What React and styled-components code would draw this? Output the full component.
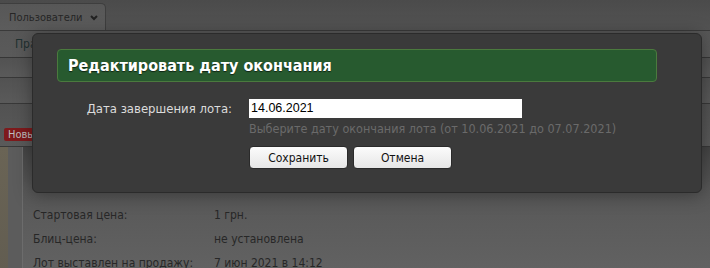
import React from "react";
import styled, { createGlobalStyle } from "styled-components";

const Global = createGlobalStyle`
  html, body { margin: 0; padding: 0; background: #4a4a4a; }
  body { font-family: Tahoma, "DejaVu Sans Condensed", "DejaVu Sans", sans-serif; }
`;

const Page = styled.div`
  position: relative;
  width: 710px;
  height: 268px;
  overflow: hidden;
  background: linear-gradient(#4d4d4d, #555 60px, #5a5a5a);
  display: flex;
  flex-direction: column;
`;

const TabBar = styled.div`
  height: 30px;
  flex: none;
  display: flex;
  align-items: flex-end;
  border-bottom: 1px solid #3a3a3a;
  background: linear-gradient(#4b4b4b, #535353);
`;

const Tab = styled.div`
  height: 27px;
  width: 106px;
  box-sizing: border-box;
  padding-left: 9px;
  display: flex;
  align-items: center;
  gap: 8px;
  font-size: 11px;
  color: #262626;
  background: linear-gradient(#575757, #5c5c5c);
  border: 1px solid #3e3e3e;
  border-left: none;
  border-bottom: none;
  border-top-right-radius: 5px;
`;

const Chevron = styled.svg`
  width: 8px;
  height: 6px;
  margin-top: 2px;
`;

const NavRow = styled.div`
  height: 26px;
  flex: none;
  display: flex;
  align-items: center;
  gap: 22px;
  padding-left: 15px;
  font-size: 12px;
  color: #1f3030;
  border-bottom: 1px solid #363636;
  background: linear-gradient(#575757, #5a5a5a);
`;

const Bar = styled.div`
  height: ${(p) => p.$h}px;
  flex: none;
  box-sizing: border-box;
  border-bottom: 1px solid #383838;
  background: linear-gradient(#525252, #5a5a5a);
  display: flex;
  align-items: ${(p) => (p.$align ? p.$align : "center")};
  padding-left: 4px;
`;

const Badge = styled.span`
  margin-top: 24px;
  display: inline-block;
  background: #7e1a1c;
  color: #bdbdbd;
  font-size: 11px;
  line-height: 13px;
  padding: 0 10px 0 4px;
  border-radius: 2px;
`;

const Content = styled.div`
  flex: 1;
  display: flex;
`;

const LeftStrip = styled.div`
  width: 8px;
  background: linear-gradient(#6a6455, #625d51);
`;

const Gutter = styled.div`
  width: 14px;
  background: #5c5c5c;
  border-right: 1px solid #6c6c6c;
`;

const Panel = styled.div`
  flex: 1;
  padding: 61px 0 0 10px;
  background: linear-gradient(#444 0px, #575757 40px, #626262 100%);
  display: grid;
  grid-template-columns: 181px 1fr;
  row-gap: 9px;
  align-content: start;
  font-size: 12px;
  color: #272727;
  line-height: 15px;
`;

const Modal = styled.div`
  position: absolute;
  left: 32px;
  top: 33px;
  width: 670px;
  height: 160px;
  box-sizing: border-box;
  background: #3a3a3a;
  border: 1px solid #2b2b2b;
  border-radius: 6px;
  box-shadow: 0 2px 18px rgba(0, 0, 0, 0.35);
  padding: 15px 0 0 24px;
`;

const Header = styled.div`
  width: 600px;
  height: 33px;
  box-sizing: border-box;
  background: #275a2f;
  border: 1px solid #4b7a3e;
  border-radius: 4px;
  display: flex;
  align-items: center;
  padding-left: 10px;
  color: #fff;
  font-weight: bold;
  font-size: 16px;
  text-shadow: 0 1px 1px rgba(0, 0, 0, 0.6);
`;

const Form = styled.div`
  display: grid;
  grid-template-columns: 176px 1fr;
  column-gap: 16px;
  margin-top: 17px;
`;

const Label = styled.label`
  font-size: 13px;
  color: #dcdcdc;
  text-align: right;
  line-height: 20px;
  padding-right: 1px;
  white-space: nowrap;
`;

const Field = styled.div`
  display: flex;
  flex-direction: column;
`;

const Input = styled.div`
  width: 273px;
  height: 19px;
  box-sizing: border-box;
  background: #fff;
  font-family: Arial, "Liberation Sans", sans-serif;
  font-size: 12.5px;
  color: #000;
  line-height: 19px;
  padding-left: 2px;
`;

const Hint = styled.div`
  margin-top: 3px;
  font-size: 12.5px;
  color: #6a6a6a;
  line-height: 15px;
  white-space: nowrap;
`;

const Buttons = styled.div`
  display: flex;
  gap: 5px;
  margin-top: 10px;
`;

const Button = styled.button`
  width: 99px;
  height: 23px;
  border: 1px solid #2a2a2a;
  border-radius: 4px;
  background: linear-gradient(#fbfbfb, #e6e6e6);
  font-family: Tahoma, "DejaVu Sans Condensed", "DejaVu Sans", sans-serif;
  font-size: 12px;
  color: #111;
  padding: 0;
`;

export default function App() {
  return (
    <>
      <Global />
      <Page>
        <TabBar>
          <Tab>
            Пользователи
            <Chevron viewBox="0 0 8 6">
              <path d="M1 1 L4 4 L7 1" stroke="#222" strokeWidth="2" fill="none" />
            </Chevron>
          </Tab>
        </TabBar>
        <NavRow>
          <span>Правила аукциона</span>
          <span>Тарифы</span>
          <span>Пополнение счета</span>
        </NavRow>
        <Bar $h={20} />
        <Bar $h={26} />
        <Bar $h={43} $align="flex-start">
          <Badge>Новы</Badge>
        </Bar>
        <Content>
          <LeftStrip />
          <Gutter />
          <Panel>
            <span>Стартовая цена:</span>
            <span>1 грн.</span>
            <span>Блиц-цена:</span>
            <span>не установлена</span>
            <span>Лот выставлен на продажу:</span>
            <span>7 июн 2021 в 14:12</span>
          </Panel>
        </Content>
        <Modal>
          <Header>Редактировать дату окончания</Header>
          <Form>
            <Label>Дата завершения лота:</Label>
            <Field>
              <Input>14.06.2021</Input>
              <Hint>Выберите дату окончания лота (от 10.06.2021 до 07.07.2021)</Hint>
              <Buttons>
                <Button>Сохранить</Button>
                <Button>Отмена</Button>
              </Buttons>
            </Field>
          </Form>
        </Modal>
      </Page>
    </>
  );
}
